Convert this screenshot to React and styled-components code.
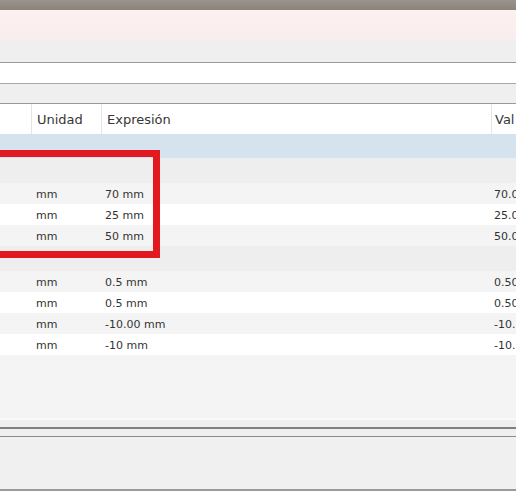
import styled, { createGlobalStyle } from 'styled-components'

const Global = createGlobalStyle`
  html, body {
    margin: 0;
    padding: 0;
    background: #efefef;
    overflow: hidden;
  }
  body {
    font-family: "DejaVu Sans", Verdana, sans-serif;
    color: #333;
  }
`

const Page = styled.div`
  width: 516px;
  height: 491px;
  display: flex;
  flex-direction: column;
  position: relative;
  overflow: hidden;
`
const TitleBar = styled.div`
  height: 10px;
  background: linear-gradient(to bottom, #99948c, #8a847b);
`
const Notice = styled.div`
  height: 30px;
  background: linear-gradient(to bottom, #fdf0f0, #f8eeed);
`
const Strip = styled.div`
  height: ${(p) => p.h}px;
  background: ${(p) => p.bg || '#efefef'};
  border-bottom: 1px solid ${(p) => p.line || '#999'};
  flex-shrink: 0;
`
const Input = styled.div`
  height: 20px;
  background: #fff;
  border-bottom: 1px solid #a8a8a8;
`
const Table = styled.div`
  display: flex;
  flex-direction: column;
  background: #f4f4f4;
  height: 314px;
  flex-shrink: 0;
  border-bottom: 2px solid #f9f9f9;
`
const Row = styled.div`
  display: grid;
  grid-template-columns: 31px 70px 390px 1fr;
  height: ${(p) => p.h || 21}px;
  align-items: center;
  background: ${(p) => p.bg};
  font-size: 11px;
  flex-shrink: 0;
`
const HeadRow = styled(Row)`
  background: #fff;
  font-size: 13px;
  color: #363636;
  align-items: stretch;
`
const HeadCell = styled.div`
  display: flex;
  align-items: center;
  padding-left: ${(p) => p.pl || 5}px;
  padding-top: 1px;
  border-left: ${(p) => (p.first ? 'none' : '1px solid #e4e4e4')};
  white-space: nowrap;
  overflow: hidden;
`
const Cell = styled.div`
  padding-left: ${(p) => p.pl || 5}px;
  padding-top: 1px;
  white-space: nowrap;
  overflow: hidden;
`
const Footer = styled.div`
  flex: 1;
  display: flex;
  flex-direction: column;
  background: #efefef;
`
const Splitter = styled.div`
  margin-top: 7px;
  height: 2px;
  background: #808080;
`
const PanelTop = styled.div`
  margin-top: 7px;
  height: 1px;
  background: #8a8a8a;
`
const PanelBody = styled.div`
  flex: 1;
  background: #f0f0f0;
  border-bottom: 2px solid #9a9a9a;
`
const Highlight = styled.div`
  position: absolute;
  left: -20px;
  top: 150px;
  width: 166px;
  height: 94px;
  border: 7px solid #e21a1f;
  pointer-events: none;
`

const rows = [
  { kind: 'sel' },
  { kind: 'group' },
  { u: 'mm', e: '70 mm', v: '70.0', bg: '#f4f4f4' },
  { u: 'mm', e: '25 mm', v: '25.0', bg: '#ffffff' },
  { u: 'mm', e: '50 mm', v: '50.0', bg: '#f4f4f4' },
  { kind: 'group' },
  { u: 'mm', e: '0.5 mm', v: '0.50', bg: '#f4f4f4' },
  { u: 'mm', e: '0.5 mm', v: '0.50', bg: '#ffffff' },
  { u: 'mm', e: '-10.00 mm', v: '-10.', bg: '#f4f4f4' },
  { u: 'mm', e: '-10 mm', v: '-10.', bg: '#ffffff' },
]

export default function App() {
  return (
    <Page>
      <Global />
      <TitleBar />
      <Notice />
      <Strip h={22} />
      <Input />
      <Strip h={19} />
      <Table>
        <HeadRow h={30}>
          <HeadCell first />
          <HeadCell>Unidad</HeadCell>
          <HeadCell>Expresión</HeadCell>
          <HeadCell pl={3}>Val</HeadCell>
        </HeadRow>
        {rows.map((r, i) => {
          if (r.kind === 'sel') return <Row key={i} h={24} bg="#d5e3ee" />
          if (r.kind === 'group') return <Row key={i} h={25} bg="#eeeeee" />
          return (
            <Row key={i} bg={r.bg}>
              <Cell />
              <Cell>{r.u}</Cell>
              <Cell pl={4}>{r.e}</Cell>
              <Cell pl={3}>{r.v}</Cell>
            </Row>
          )
        })}
      </Table>
      <Footer>
        <Splitter />
        <PanelTop />
        <PanelBody />
      </Footer>
      <Highlight />
    </Page>
  )
}
